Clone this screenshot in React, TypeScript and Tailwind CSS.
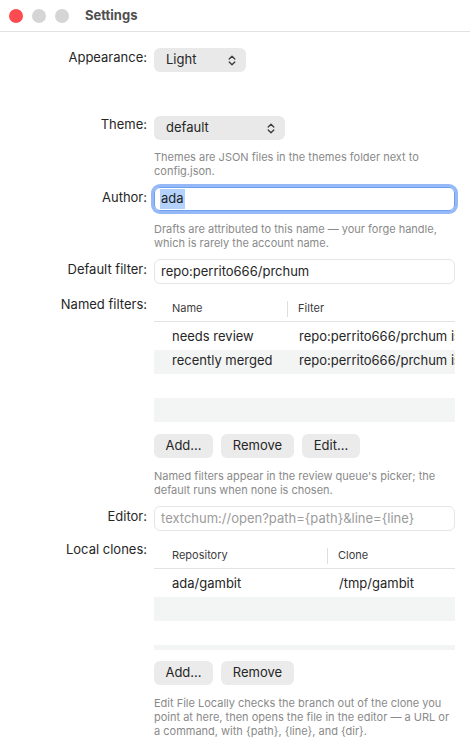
import type { ReactNode } from "react";

const font = { fontFamily: "Inter, 'Noto Sans', sans-serif" };

function Chevrons() {
  return (
    <svg width="8" height="11" viewBox="0 0 8 11" fill="none" stroke="#3a3a3a" strokeWidth="1.3" strokeLinecap="round" strokeLinejoin="round">
      <path d="M1.2 4 L4 1.2 L6.8 4" />
      <path d="M1.2 7 L4 9.8 L6.8 7" />
    </svg>
  );
}

function Row({ label, labelPad = "pt-0", className = "", children }: { label?: string; labelPad?: string; className?: string; children: ReactNode }) {
  return (
    <div className={`flex ${className}`}>
      <div className={`w-[147px] shrink-0 text-right text-[13px] leading-4 text-[#262626] ${labelPad}`}>{label}</div>
      <div className="ml-[7px] w-[301px]">{children}</div>
    </div>
  );
}

function Popup({ value, width }: { value: string; width: string }) {
  return (
    <div className={`flex h-6 items-center justify-between rounded-[6px] bg-[#e9e9e9] pl-3 pr-[10px] text-[13px] text-[#262626] ${width}`}>
      <span>{value}</span>
      <Chevrons />
    </div>
  );
}

function Help({ children, className = "" }: { children: ReactNode; className?: string }) {
  return <p className={`text-[11px] leading-[14px] text-[#8a8a8a] ${className}`}>{children}</p>;
}

function Field({ value, placeholder }: { value?: string; placeholder?: string }) {
  return (
    <div className="flex h-[25px] items-center overflow-hidden whitespace-nowrap rounded-[6px] border border-[#e6e6e6] px-[6px] text-[13px]">
      {value ? <span className="text-[#262626]">{value}</span> : <span className="text-[#9b9b9b]">{placeholder}</span>}
    </div>
  );
}

function Button({ children, width }: { children: ReactNode; width: string }) {
  return (
    <div className={`flex h-6 items-center justify-center rounded-[6px] bg-[#ebebeb] text-[13px] text-[#262626] ${width}`}>{children}</div>
  );
}

type Table = { cols: [string, string]; split: string; rows: [string, string][]; className: string };

// Fixed-height table; empty striped rows fill the rest and get clipped.
function DataTable({ cols, split, rows, className }: Table) {
  const lines = [...rows, ...Array(6 - rows.length).fill(["", ""])] as [string, string][];
  return (
    <div className={`overflow-hidden ${className}`}>
      <div className="flex h-[26px] items-center border-b border-[#e3e3e3] text-[11px] text-[#3c3c3c]">
        <div className={`flex h-4 items-center border-r border-[#dedede] pl-[18px] ${split}`}>{cols[0]}</div>
        <div className="pl-[10px]">{cols[1]}</div>
      </div>
      <div className="pt-1">
        {lines.map(([a, b], i) => (
          <div key={i} className={`flex h-6 items-center whitespace-nowrap pb-[2px] text-[13px] text-[#262626] ${i % 2 ? "bg-[#f3f4f4]" : ""}`}>
            <div className={`pl-[18px] ${split}`}>{a}</div>
            <div className="min-w-0 overflow-hidden pl-[11px]">{b}</div>
          </div>
        ))}
      </div>
    </div>
  );
}

export default function App() {
  return (
    <div className="h-[752px] w-[470px] overflow-hidden bg-white" style={font}>
      {/* window chrome */}
      <div className="flex h-8 items-center border-b border-[#e2e2e2]">
        <div className="ml-[9px] h-[14px] w-[14px] rounded-full bg-[#fe4b4f]" />
        <div className="ml-[9px] h-[14px] w-[14px] rounded-full bg-[#d5d5d5]" />
        <div className="ml-[9px] h-[14px] w-[14px] rounded-full bg-[#d5d5d5]" />
        <span className="ml-4 mt-px text-[13px] font-bold text-[#4f4f4f]">Settings</span>
      </div>

      <Row label="Appearance:" labelPad="pt-[1px]" className="mt-4">
        <Popup value="Light" width="w-[92px]" />
      </Row>

      <Row label="Theme:" className="mt-[44px]">
        <Popup value="default" width="w-[131px]" />
        <Help className="mt-[10px]">Themes are JSON files in the themes folder next to config.json.</Help>
      </Row>

      <Row label="Author:" labelPad="pt-[2px]" className="mt-[9px]">
        <div className="flex h-6 items-center rounded-[6px] border border-[#6ea0f0] px-[5px] text-[13px] text-[#1e1e1e] ring-[3px] ring-[#94b9f6]">
          <span className="bg-[#b3d3fd] px-px">ada</span>
        </div>
        <Help className="mt-[11px]">Drafts are attributed to this name — your forge handle, which is rarely the account name.</Help>
      </Row>

      <Row label="Default filter:" labelPad="pt-[2px]" className="mt-[9px]">
        <Field value="repo:perrito666/prchum" />
      </Row>

      <Row label="Named filters:" className="mt-3">
        <DataTable
          cols={["Name", "Filter"]}
          split="w-[134px] shrink-0"
          className="h-[127px]"
          rows={[
            ["needs review", "repo:perrito666/prchum is:open"],
            ["recently merged", "repo:perrito666/prchum is:merged"],
          ]}
        />
        <div className="mt-[11px] flex gap-2">
          <Button width="w-[59px]">Add...</Button>
          <Button width="w-[73px]">Remove</Button>
          <Button width="w-[58px]">Edit...</Button>
        </div>
        <Help className="mt-[11px]">Named filters appear in the review queue's picker; the default runs when none is chosen.</Help>
      </Row>

      <Row label="Editor:" labelPad="pt-[2px]" className="mt-[9px]">
        <Field placeholder="textchum://open?path={path}&line={line}" />
      </Row>

      <Row label="Local clones:" className="mt-[10px]">
        <DataTable
          cols={["Repository", "Clone"]}
          split="w-[174px] shrink-0"
          className="mt-[2px] h-[107px]"
          rows={[["ada/gambit", "/tmp/gambit"]]}
        />
        <div className="mt-[11px] flex gap-2">
          <Button width="w-[59px]">Add...</Button>
          <Button width="w-[73px]">Remove</Button>
        </div>
        <Help className="mt-[11px]">
          {"Edit File Locally checks the branch out of the clone you point at here, then opens the file in the editor — a URL or a command, with {path}, {line}, and {dir}."}
        </Help>
      </Row>
    </div>
  );
}
